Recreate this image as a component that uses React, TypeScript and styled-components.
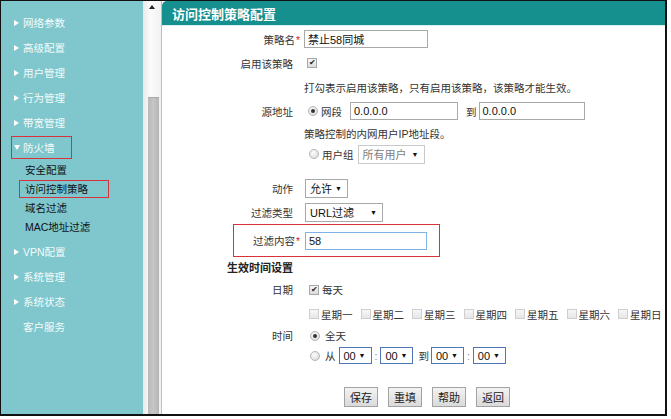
import React from "react";
import styled, { createGlobalStyle } from "styled-components";

const GlobalStyle = createGlobalStyle`
  html, body {
    margin: 0;
    padding: 0;
    background: #fff;
  }
  body {
    font-family: "Liberation Sans", "Noto Sans CJK SC", sans-serif;
    font-size: 10.5px;
    color: #333;
  }
`;

const Frame = styled.div`
  width: 667px;
  height: 416px;
  box-sizing: border-box;
  border-style: solid;
  border-color: #111;
  border-width: 1px 2px 2px 1px;
  display: flex;
  overflow: hidden;
`;

/* ---------- sidebar ---------- */

const Sidebar = styled.div`
  width: 142px;
  flex-shrink: 0;
  background: #7fc7cd;
  padding-top: 9px;
  box-sizing: border-box;
`;

const Item = styled.div`
  height: 25px;
  display: flex;
  align-items: center;
  padding-left: 10px;
`;

const ItemInner = styled.div<{ $boxed?: boolean }>`
  display: flex;
  align-items: center;
  height: 23px;
  box-sizing: border-box;
  padding-left: 2px;
  width: ${(p) => (p.$boxed ? "61px" : "auto")};
  border: 1px solid ${(p) => (p.$boxed ? "#d8323a" : "transparent")};
  color: #f4fbfb;
  font-size: 10.5px;
`;

const Arrow = styled.span<{ $down?: boolean; $hidden?: boolean }>`
  width: 0;
  height: 0;
  margin-right: 4px;
  visibility: ${(p) => (p.$hidden ? "hidden" : "visible")};
  ${(p) =>
    p.$down
      ? `border-top: 5px solid #fff; border-left: 3px solid transparent; border-right: 3px solid transparent; margin-right: 3px;`
      : `border-left: 5px solid #fff; border-top: 3.5px solid transparent; border-bottom: 3.5px solid transparent;`}
`;

const SubList = styled.div`
  padding-bottom: 3px;
`;

const SubItem = styled.div`
  height: 19px;
  display: flex;
  align-items: center;
  padding-left: 18px;
`;

const SubInner = styled.div<{ $boxed?: boolean }>`
  height: 18px;
  display: flex;
  align-items: center;
  box-sizing: border-box;
  padding: 0 5px;
  width: ${(p) => (p.$boxed ? "90px" : "auto")};
  border: 1px solid ${(p) => (p.$boxed ? "#d8323a" : "transparent")};
  color: #111;
  font-size: 10.5px;
`;

/* ---------- scrollbar ---------- */

const Scroll = styled.div`
  width: 18px;
  flex-shrink: 0;
  display: flex;
  flex-direction: column;
  background: linear-gradient(to right, #e9e9e9, #fbfbfb 40%, #f1f1f1);
`;

const ScrollArrow = styled.div`
  height: 12px;
  display: flex;
  justify-content: center;
  align-items: center;
  &::after {
    content: "";
    border-bottom: 4px solid #222;
    border-left: 3px solid transparent;
    border-right: 3px solid transparent;
  }
`;

const ScrollGap = styled.div`
  height: 84px;
`;

const Thumb = styled.div`
  flex: 1;
  margin-left: 5px;
  width: 11px;
  background: linear-gradient(to right, #b9b9b9, #c6c6c6, #b4b4b4);
  border-top: 1px solid #a8a8a8;
`;

/* ---------- content ---------- */

const Content = styled.div`
  flex: 1;
  border-left: 1px solid #8fd0d5;
  display: flex;
  flex-direction: column;
  background: #fff;
`;

const Header = styled.div`
  height: 24px;
  background: #168f8f;
  border-top-left-radius: 5px;
  color: #fff;
  font-weight: bold;
  font-size: 13px;
  display: flex;
  align-items: center;
  padding-left: 10px;
  border-bottom: 1px solid #d9eeee;
`;

const Row = styled.div<{ $h: number }>`
  height: ${(p) => p.$h}px;
  display: flex;
  align-items: center;
`;

const Label = styled.div<{ $w?: number }>`
  width: ${(p) => p.$w ?? 131}px;
  flex-shrink: 0;
  text-align: right;
  color: #333;
`;

const Star = styled.span`
  color: #e02020;
  margin-right: -7px;
  padding-left: 1px;
`;

const Value = styled.div<{ $pad?: number }>`
  margin-left: 11px;
  padding-left: ${(p) => p.$pad ?? 0}px;
  display: flex;
  align-items: center;
  white-space: nowrap;
`;

const Text = styled.span<{ $ml?: number; $mr?: number; $muted?: boolean }>`
  margin-left: ${(p) => p.$ml ?? 0}px;
  margin-right: ${(p) => p.$mr ?? 0}px;
  color: ${(p) => (p.$muted ? "#888" : "#333")};
`;

const TextInput = styled.div<{ $w: number; $focus?: boolean }>`
  width: ${(p) => p.$w}px;
  height: 18px;
  box-sizing: border-box;
  border: 1px solid ${(p) => (p.$focus ? "#7fb2e5" : "#a9a9a9")};
  background: #fff;
  display: flex;
  align-items: center;
  padding-left: 3px;
  color: #111;
  font-size: 11px;
`;

const Select = styled.div<{ $w: number; $disabled?: boolean; $blue?: boolean }>`
  width: ${(p) => p.$w}px;
  height: ${(p) => (p.$blue ? 17 : 19)}px;
  box-sizing: border-box;
  border: 1px solid
    ${(p) => (p.$blue ? "#4f76b8" : p.$disabled ? "#c9c9c9" : "#a9a9a9")};
  background: #fff;
  display: flex;
  align-items: center;
  justify-content: space-between;
  padding: 0 5px 0 4px;
  color: ${(p) => (p.$disabled ? "#808080" : "#111")};
  font-size: 11px;
  &::after {
    content: "▼";
    font-size: 7px;
    color: #111;
  }
`;

const Check = styled.span<{ $checked?: boolean }>`
  width: 10px;
  height: 10px;
  box-sizing: border-box;
  border: 1px solid ${(p) => (p.$checked ? "#a8a8a8" : "#cfcfcf")};
  background: ${(p) =>
    p.$checked ? "linear-gradient(#f6f6f6, #dcdcdc)" : "linear-gradient(#f7f7f7, #e6e6e6)"};
  display: inline-flex;
  align-items: center;
  justify-content: center;
  font-size: 8px;
  line-height: 1;
  color: #222;
  flex-shrink: 0;
  &::after {
    content: "${(p) => (p.$checked ? "✔" : "")}";
  }
`;

const Radio = styled.span<{ $checked?: boolean }>`
  width: 10px;
  height: 10px;
  box-sizing: border-box;
  border-radius: 50%;
  border: 1px solid #b5b5b5;
  background: radial-gradient(circle at 40% 35%, #fdfdfd, #d4d4d4);
  display: inline-flex;
  align-items: center;
  justify-content: center;
  flex-shrink: 0;
  &::after {
    content: "";
    width: 4px;
    height: 4px;
    border-radius: 50%;
    background: ${(p) => (p.$checked ? "#333" : "transparent")};
  }
`;

const Highlight = styled.div`
  margin-left: 71px;
  width: 207px;
  height: 33px;
  box-sizing: border-box;
  border: 1px solid #d8323a;
  display: flex;
  align-items: center;
`;

const SectionTitle = styled.div`
  height: 20px;
  display: flex;
  align-items: center;
  padding-left: 65px;
  font-weight: bold;
  font-size: 11px;
  color: #222;
`;

const Week = styled.span`
  display: inline-flex;
  align-items: center;
  gap: 2px;
  margin-right: 8px;
`;

const Buttons = styled.div`
  margin-top: 21px;
  display: flex;
  gap: 10px;
  padding-left: 182px;
`;

const Button = styled.div`
  width: 34px;
  height: 20px;
  box-sizing: border-box;
  border: 1px solid #a3a3a3;
  background: linear-gradient(#f3f3f3, #dadada);
  display: flex;
  align-items: center;
  justify-content: center;
  color: #222;
  font-size: 11px;
`;

const mainMenu = ["网络参数", "高级配置", "用户管理", "行为管理", "带宽管理"];
const subMenu = ["安全配置", "访问控制策略", "域名过滤", "MAC地址过滤"];
const laterMenu = ["VPN配置", "系统管理", "系统状态"];
const weekdays = ["星期一", "星期二", "星期三", "星期四", "星期五", "星期六", "星期日"];

export default function App() {
  return (
    <>
      <GlobalStyle />
      <Frame>
        <Sidebar>
          {mainMenu.map((m) => (
            <Item key={m}>
              <ItemInner>
                <Arrow />
                {m}
              </ItemInner>
            </Item>
          ))}
          <Item>
            <ItemInner $boxed>
              <Arrow $down />
              防火墙
            </ItemInner>
          </Item>
          <SubList>
            {subMenu.map((s) => (
              <SubItem key={s}>
                <SubInner $boxed={s === "访问控制策略"}>{s}</SubInner>
              </SubItem>
            ))}
          </SubList>
          {laterMenu.map((m) => (
            <Item key={m}>
              <ItemInner>
                <Arrow />
                {m}
              </ItemInner>
            </Item>
          ))}
          <Item>
            <ItemInner>
              <Arrow $hidden />
              客户服务
            </ItemInner>
          </Item>
        </Sidebar>

        <Scroll>
          <ScrollArrow />
          <ScrollGap />
          <Thumb />
        </Scroll>

        <Content>
          <Header>访问控制策略配置</Header>
          <div style={{ height: 1 }} />
          <Row $h={24}>
            <Label>
              策略名<Star>*</Star>
            </Label>
            <Value>
              <TextInput $w={124}>禁止58同城</TextInput>
            </Value>
          </Row>
          <Row $h={24}>
            <Label>启用该策略</Label>
            <Value $pad={3}>
              <Check $checked />
            </Value>
          </Row>
          <Row $h={24}>
            <Label />
            <Value>
              <Text>打勾表示启用该策略，只有启用该策略，该策略才能生效。</Text>
            </Value>
          </Row>
          <Row $h={24}>
            <Label>源地址</Label>
            <Value $pad={4}>
              <Radio $checked />
              <Text $ml={3} $mr={8}>
                网段
              </Text>
              <TextInput $w={108}>0.0.0.0</TextInput>
              <Text $ml={8} $mr={2}>
                到
              </Text>
              <TextInput $w={106}>0.0.0.0</TextInput>
            </Value>
          </Row>
          <Row $h={20}>
            <Label />
            <Value>
              <Text>策略控制的内网用户IP地址段。</Text>
            </Value>
          </Row>
          <Row $h={22}>
            <Label />
            <Value $pad={5}>
              <Radio />
              <Text $ml={3} $mr={4}>
                用户组
              </Text>
              <Select $w={67} $disabled>
                所有用户
              </Select>
            </Value>
          </Row>
          <div style={{ height: 11 }} />
          <Row $h={24}>
            <Label>动作</Label>
            <Value $pad={1}>
              <Select $w={43}>允许</Select>
            </Value>
          </Row>
          <Row $h={24}>
            <Label>过滤类型</Label>
            <Value $pad={1}>
              <Select $w={78}>URL过滤</Select>
            </Value>
          </Row>
          <Row $h={33}>
            <Highlight>
              <Label $w={59}>
                过滤内容<Star>*</Star>
              </Label>
              <Value $pad={1}>
                <TextInput $w={122} $focus>
                  58
                </TextInput>
              </Value>
            </Highlight>
          </Row>
          <SectionTitle>生效时间设置</SectionTitle>
          <Row $h={25}>
            <Label>日期</Label>
            <Value $pad={5}>
              <Check $checked />
              <Text $ml={3}>每天</Text>
            </Value>
          </Row>
          <Row $h={24}>
            <Label />
            <Value $pad={5}>
              {weekdays.map((d) => (
                <Week key={d}>
                  <Check />
                  <Text>{d}</Text>
                </Week>
              ))}
            </Value>
          </Row>
          <Row $h={19}>
            <Label>时间</Label>
            <Value $pad={6}>
              <Radio $checked />
              <Text $ml={5}>全天</Text>
            </Value>
          </Row>
          <Row $h={21}>
            <Label />
            <Value $pad={6}>
              <Radio />
              <Text $ml={5} $mr={3}>
                从
              </Text>
              <Select $w={33} $blue>
                00
              </Select>
              <Text $ml={3} $mr={3} $muted>
                :
              </Text>
              <Select $w={33} $blue>
                00
              </Select>
              <Text $ml={5} $mr={2}>
                到
              </Text>
              <Select $w={33} $blue>
                00
              </Select>
              <Text $ml={3} $mr={3} $muted>
                :
              </Text>
              <Select $w={33} $blue>
                00
              </Select>
            </Value>
          </Row>
          <Buttons>
            <Button>保存</Button>
            <Button>重填</Button>
            <Button>帮助</Button>
            <Button>返回</Button>
          </Buttons>
        </Content>
      </Frame>
    </>
  );
}
